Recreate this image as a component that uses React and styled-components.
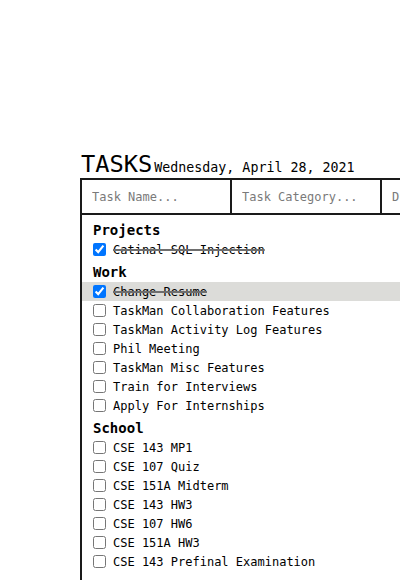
import React from "react";
import styled, { createGlobalStyle } from "styled-components";

const GlobalStyle = createGlobalStyle`
  html, body {
    margin: 0;
    padding: 0;
    overflow: hidden;
    background: #fff;
  }
  body {
    font-family: "DejaVu Sans Mono", "Liberation Mono", monospace;
    color: #000;
  }
`;

const Page = styled.div`
  padding: 150px 0 0 80px;
  height: 580px;
  box-sizing: border-box;
  overflow: hidden;
`;

const TitleRow = styled.div`
  display: flex;
  align-items: baseline;
  padding-left: 1px;
`;

const Title = styled.h1`
  margin: 0;
  font-size: 23.7px;
  font-weight: normal;
  line-height: normal;
`;

const DateText = styled.span`
  font-size: 13.3px;
  margin-left: 2px;
`;

const Board = styled.div`
  width: 452px;
  border-left: 2px solid #1a1a1a;
  border-top: 2px solid #1a1a1a;
  padding-bottom: 20px;
`;

const InputRow = styled.div`
  display: flex;
  border-bottom: 2px solid #1a1a1a;
`;

const Field = styled.input`
  box-sizing: border-box;
  width: 150px;
  height: 33px;
  flex: none;
  border: none;
  border-right: 2px solid #1a1a1a;
  padding: 0 10px;
  margin: 0;
  font-family: "DejaVu Sans Mono", monospace;
  font-size: 12px;
  outline: none;
  background: #fff;

  &::placeholder {
    color: #7a7a7a;
  }
`;

const Body = styled.div`
  padding-top: 2px;
`;

const Heading = styled.h2`
  margin: 0;
  padding: 4px 0 0 11px;
  font-size: 14px;
  font-weight: bold;
  line-height: 19px;
`;

const Row = styled.label`
  display: flex;
  align-items: center;
  height: 19px;
  padding-left: 11px;
  background: ${(p) => (p.$active ? "#dcdcd9" : "transparent")};
`;

const Check = styled.input`
  width: 13px;
  height: 13px;
  margin: 0 7px 0 0;
  flex: none;
`;

const TaskText = styled.span`
  font-size: 12px;
  white-space: nowrap;
  text-decoration: ${(p) => (p.$done ? "line-through" : "none")};
  text-decoration-color: #6e6e6e;
  text-decoration-thickness: 2px;
`;

const groups = [
  {
    name: "Projects",
    tasks: [{ title: "Catinal SQL Injection", done: true }],
  },
  {
    name: "Work",
    tasks: [
      { title: "Change Resume", done: true, active: true },
      { title: "TaskMan Collaboration Features" },
      { title: "TaskMan Activity Log Features" },
      { title: "Phil Meeting" },
      { title: "TaskMan Misc Features" },
      { title: "Train for Interviews" },
      { title: "Apply For Internships" },
    ],
  },
  {
    name: "School",
    tasks: [
      { title: "CSE 143 MP1" },
      { title: "CSE 107 Quiz" },
      { title: "CSE 151A Midterm" },
      { title: "CSE 143 HW3" },
      { title: "CSE 107 HW6" },
      { title: "CSE 151A HW3" },
      { title: "CSE 143 Prefinal Examination" },
    ],
  },
];

export default function App() {
  return (
    <>
      <GlobalStyle />
      <Page>
        <TitleRow>
          <Title>TASKS</Title>
          <DateText>Wednesday, April 28, 2021</DateText>
        </TitleRow>
        <Board>
          <InputRow>
            <Field placeholder="Task Name..." />
            <Field placeholder="Task Category..." />
            <Field placeholder="Due Date..." />
          </InputRow>
          <Body>
            {groups.map((group) => (
              <div key={group.name}>
                <Heading>{group.name}</Heading>
                {group.tasks.map((task) => (
                  <Row key={task.title} $active={task.active}>
                    <Check type="checkbox" defaultChecked={!!task.done} />
                    <TaskText $done={task.done}>{task.title}</TaskText>
                  </Row>
                ))}
              </div>
            ))}
          </Body>
        </Board>
      </Page>
    </>
  );
}
